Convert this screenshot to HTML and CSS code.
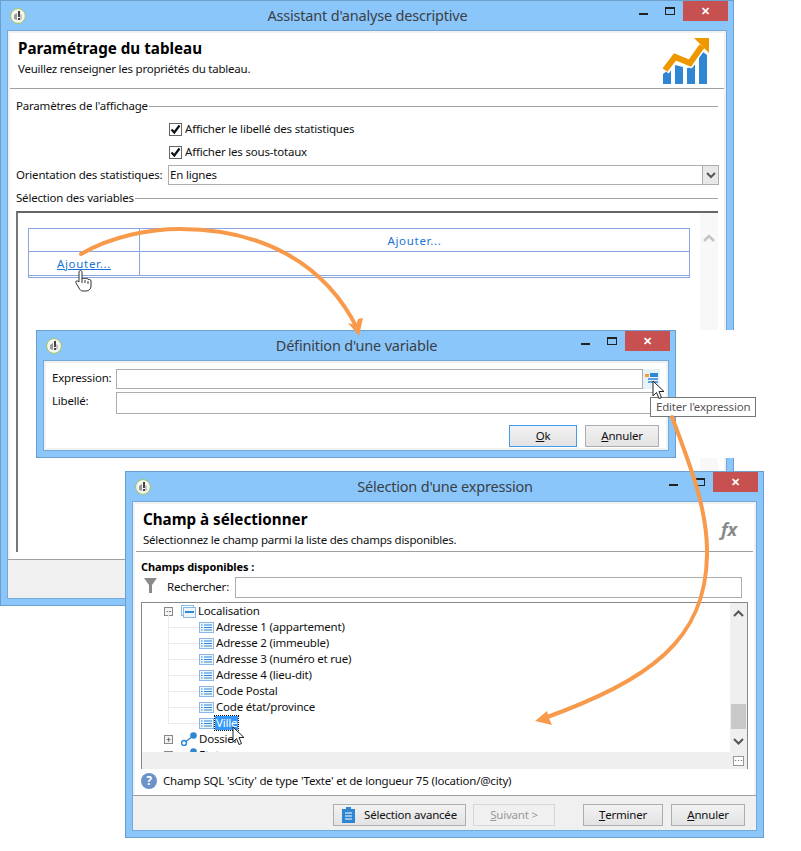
FILE: index.html
```html
<!DOCTYPE html>
<html lang="fr">
<head>
<meta charset="utf-8">
<title>Assistant d'analyse descriptive</title>
<link rel="stylesheet" href="styles.css">
</head>
<body>
<svg class="defs" aria-hidden="true">
  <symbol id="app" viewBox="0 0 16 16">
    <circle cx="8" cy="8" r="7.4" fill="#f4f4f0" stroke="#9cc45e" stroke-width="1"/>
    <path d="M4 7l3-2v7l-3-1z" fill="#9a9a9a"/>
    <path d="M8 3h2v6H8zM8 10h2v2H8z" fill="#444"/>
    <path d="M10 6l2 1v4l-2 1z" fill="#c4c4c4"/>
  </symbol>
  <symbol id="field" viewBox="0 0 15 11">
    <rect x=".5" y=".5" width="14" height="10" fill="#eef6fd" stroke="#8ab8e4"/>
    <path d="M2 3h1.500M2 5.500h1.500M2 8h1.500M5 3h8M5 5.500h8M5 8h8" stroke="#2f86d3" stroke-width="1"/>
  </symbol>
  <symbol id="link" viewBox="0 0 16 14">
    <circle cx="3" cy="11" r="2.500" fill="none" stroke="#2f86d3" stroke-width="1.500"/>
    <path d="M5 9.500l5-4" stroke="#2f86d3" stroke-width="1.500"/>
    <circle cx="12.500" cy="3.500" r="3.300" fill="#2f86d3"/>
  </symbol>
  <symbol id="arrowcur" viewBox="0 0 14 20">
    <path d="M1 1v15l3.500-3.500 2.500 6 2.500-1-2.500-6H12z" fill="#fff" stroke="#222" stroke-width="1"/>
  </symbol>
  <symbol id="tick" viewBox="0 0 11 11">
    <path d="M1.500 5.500L4.300 8.500 9.500 1.500" fill="none" stroke="#111" stroke-width="2.200"/>
  </symbol>
</svg>

<section class="win win-main">
  <header class="titlebar">
    <svg class="appicon"><use href="#app"/></svg>
    <h2 class="wintitle">Assistant d'analyse descriptive</h2>
    <div class="controls"><span class="min"></span><span class="max"></span><span class="close">✕</span></div>
  </header>
  <div class="winbody">
    <div class="pagehead pagehead-main">
      <div>
        <h1 class="pagetitle">Paramétrage du tableau</h1>
        <p class="pagesub">Veuillez renseigner les propriétés du tableau.</p>
      </div>
      <svg class="chart" viewBox="0 0 50 48">
        <path d="M3 37l8-6v16H3zM15 28l8 2v17h-8zM27 31l6-1 2-3v20h-8zM39 20l4-5 4 3v29h-8z" fill="#2f86d3"/>
        <path d="M5 34L15 20 30 26 42 9" fill="none" stroke="#fff" stroke-width="9"/>
        <path d="M5 33L15 20 30 26 42 9" fill="none" stroke="#ee9800" stroke-width="6" stroke-linejoin="miter"/>
        <path d="M34 1h15v15z" fill="#ee9800"/>
      </svg>
    </div>
    <div class="panel">
      <div class="legend legend-first"><span>Paramètres de l'affichage</span></div>
      <label class="check check-first"><span class="box"><svg class="tick"><use href="#tick"/></svg></span>Afficher le libellé des statistiques</label>
      <label class="check check-second"><span class="box"><svg class="tick"><use href="#tick"/></svg></span>Afficher les sous-totaux</label>
      <div class="selectrow">
        <span class="selectlabel">Orientation des statistiques:</span>
        <div class="select"><span class="selectval">En lignes</span><span class="selectbtn"><svg width="10" height="7" viewBox="0 0 10 7"><path d="M1 1l4 4 4-4" fill="none" stroke="#555" stroke-width="2"/></svg></span></div>
      </div>
      <div class="legend legend-second"><span>Sélection des variables</span></div>
      <div class="listbox">
        <div class="gridwrap">
          <div class="vtable">
            <div class="vcell vcell-blank"></div>
            <div class="vcell vcell-add">Ajouter...</div>
            <div class="vcell vcell-link"><a class="addlink">Ajouter...</a></div>
            <div class="vcell"></div>
          </div>
        </div>
        <div class="lightscroll"><svg width="12" height="8" viewBox="0 0 12 8"><path d="M1 7l5-5 5 5" fill="none" stroke="#c4c4c4" stroke-width="2.500"/></svg></div>
      </div>
    </div>
    <div class="bottombar bottombar-main"></div>
  </div>
</section>

<div class="patch"></div>

<section class="win win-var">
  <header class="titlebar">
    <svg class="appicon"><use href="#app"/></svg>
    <h2 class="wintitle">Définition d'une variable</h2>
    <div class="controls"><span class="min"></span><span class="max"></span><span class="close">✕</span></div>
  </header>
  <div class="winbody">
    <div class="form">
      <div class="formrow formrow-a">
        <span class="formlabel">Expression:</span>
        <div class="input input-grow"></div>
        <span class="exprbtn">
          <svg width="14" height="14" viewBox="0 0 14 14"><rect x="0" y="2" width="4" height="3" fill="#f0a030"/><rect x="5" y="1" width="8" height="4" fill="#2f86d3"/><path d="M3 7h10M3 10h10" stroke="#2f86d3" stroke-width="1.500"/></svg>
        </span>
      </div>
      <div class="formrow formrow-b">
        <span class="formlabel">Libellé:</span>
        <div class="input input-grow"></div>
      </div>
      <div class="formbtns">
        <button class="btn btn-ok"><u>O</u>k</button>
        <button class="btn btn-cancel"><u>A</u>nnuler</button>
      </div>
    </div>
  </div>
</section>

<section class="win win-expr">
  <header class="titlebar">
    <svg class="appicon"><use href="#app"/></svg>
    <h2 class="wintitle">Sélection d'une expression</h2>
    <div class="controls"><span class="min"></span><span class="max"></span><span class="close">✕</span></div>
  </header>
  <div class="winbody">
    <div class="pagehead pagehead-expr">
      <div>
        <h1 class="pagetitle">Champ à sélectionner</h1>
        <p class="pagesub">Sélectionnez le champ parmi la liste des champs disponibles.</p>
      </div>
      <span class="fx">fx</span>
    </div>
    <div class="exprmain">
      <div class="availlabel">Champs disponibles :</div>
      <div class="searchrow">
        <svg class="funnel" width="13" height="15" viewBox="0 0 13 15"><path d="M0 0h13L8 7v8H5V7z" fill="#8a8a8a"/></svg>
        <span class="searchlabel">Rechercher:</span>
        <div class="input input-grow"></div>
      </div>
      <div class="tree">
        <div class="treepane">
          <div class="node node-parent">
            <span class="expander">−</span>
            <svg class="nodeicon" width="15" height="13" viewBox="0 0 15 13"><rect x=".5" y=".5" width="12" height="10" fill="#fff" stroke="#8ab8e4"/><rect x="2.500" y="2.500" width="12" height="10" fill="#eef6fd" stroke="#8ab8e4"/><rect x="4" y="6" width="9" height="2" fill="#2f86d3"/></svg>
            <span>Localisation</span>
          </div>
          <div class="node node-child"><svg class="fieldicon"><use href="#field"/></svg><span>Adresse 1 (appartement)</span></div>
          <div class="node node-child"><svg class="fieldicon"><use href="#field"/></svg><span>Adresse 2 (immeuble)</span></div>
          <div class="node node-child"><svg class="fieldicon"><use href="#field"/></svg><span>Adresse 3 (numéro et rue)</span></div>
          <div class="node node-child"><svg class="fieldicon"><use href="#field"/></svg><span>Adresse 4 (lieu-dit)</span></div>
          <div class="node node-child"><svg class="fieldicon"><use href="#field"/></svg><span>Code Postal</span></div>
          <div class="node node-child"><svg class="fieldicon"><use href="#field"/></svg><span>Code état/province</span></div>
          <div class="node node-child"><svg class="fieldicon"><use href="#field"/></svg><span class="selected">Ville</span></div>
          <div class="node node-parent">
            <span class="expander">+</span>
            <svg class="nodeicon" width="16" height="14"><use href="#link"/></svg>
            <span>Dossier</span>
          </div>
          <div class="node node-parent">
            <span class="expander">+</span>
            <svg class="nodeicon" width="16" height="14"><use href="#link"/></svg>
            <span>Etat</span>
          </div>
        </div>
        <div class="treescroll">
          <svg width="11" height="7" viewBox="0 0 11 7"><path d="M1 6l4.500-4.500L10 6" fill="none" stroke="#555" stroke-width="2"/></svg>
          <span class="thumb"></span>
          <svg width="11" height="7" viewBox="0 0 11 7"><path d="M1 1l4.500 4.500L10 1" fill="none" stroke="#555" stroke-width="2"/></svg>
        </div>
        <div class="hscroll"></div>
        <div class="corner"><span class="cornerbtn">⋯</span></div>
      </div>
      <div class="inforow">
        <span class="help">?</span>
        <span>Champ SQL 'sCity' de type 'Texte' et de longueur 75 (location/@city)</span>
      </div>
    </div>
    <div class="bottombar bottombar-expr">
      <button class="btn btn-adv">
        <svg width="13" height="16" viewBox="0 0 13 16"><path d="M4 0h5v2h4v14H0V2h4z" fill="#2f86d3"/><path d="M3 6h7M3 9h7M3 12h7" stroke="#fff" stroke-width="1"/></svg>
        Sélection avancée
      </button>
      <button class="btn btn-next" disabled><u>S</u>uivant &gt;</button>
      <button class="btn btn-finish"><u>T</u>erminer</button>
      <button class="btn btn-cancel2"><u>A</u>nnuler</button>
    </div>
  </div>
</section>

<div class="tooltip">Editer l'expression</div>

<svg class="overlay" viewBox="0 0 801 851">
  <g fill="none" stroke="#f79a4b" stroke-width="4" stroke-linecap="round">
    <path d="M81 254C112 236 150 229 180 229C260 229 325 262 358 330"/>
    <path d="M672 417C690 465 708 510 707 555C706 640 650 680 542 719"/>
  </g>
  <path d="M359 336L348 323 356 325 358 319 363 318z" fill="#f79a4b"/>
  <path d="M535 721L547 711 549 718 552 725z" fill="#f79a4b"/>
  <g>
    <path d="M79 272c0-2 3-2 3 0v7c1-1 3-1 3 0 1-1 3-1 3 .5 1-.5 3 0 3 1.500v5c0 3-2 5-5 5h-3c-2 0-3-1-4-3l-3-5c-1-2 1-3 3-1l0 0z" fill="#fff" stroke="#333" stroke-width="1"/>
    <path d="M82 279v4M85 280v3M88 281v3" stroke="#333" stroke-width="1"/>
  </g>
  <use href="#arrowcur" x="652" y="380" width="14" height="20"/>
  <use href="#arrowcur" x="232" y="726" width="14" height="20"/>
</svg>
</body>
</html>
```
FILE: styles.css
```css
* { box-sizing: border-box; }
html, body { margin: 0; padding: 0; }
body {
  position: relative;
  width: 801px;
  height: 851px;
  overflow: hidden;
  background: #fff;
  font-family: "Noto Sans", "Open Sans", sans-serif;
  font-size: 11.5px;
  letter-spacing: -0.2px;
  line-height: 14px;
  color: #111;
}
.defs { position: absolute; width: 0; height: 0; }
.overlay { position: absolute; left: 0; top: 0; width: 801px; height: 851px; z-index: 10; pointer-events: none; }

/* windows on the desktop */
.win {
  position: absolute;
  display: flex;
  flex-direction: column;
  background: #8bc6fb;
  border: 1px solid #6c9fcc;
  padding: 0 6px 6px;
}
.win-main { left: 0; top: 0; width: 734px; height: 606px; }
.win-var { left: 36px; top: 330px; width: 640px; height: 128px; z-index: 3; }
.win-expr { left: 125px; top: 471px; width: 639px; height: 367px; z-index: 4; }
.patch { position: absolute; left: 676px; top: 330px; width: 125px; height: 128px; background: #fff; z-index: 2; }

.titlebar { position: relative; height: 29px; flex: none; display: flex; align-items: center; justify-content: center; }
.appicon { position: absolute; left: 3px; top: 7px; width: 16px; height: 16px; }
.wintitle { margin: 0 0 0 1px; font-size: 14.5px; font-weight: 400; color: #3a3f45; line-height: 20px; position: relative; top: -1px; }
.controls { position: absolute; right: -1px; top: 0; display: flex; align-items: flex-start; }
.min { width: 9px; height: 2px; margin: 12px 17px 0 0; background: #222; }
.max { width: 10px; height: 8px; margin: 6px 8px 0 0; border: 1px solid #222; border-top-width: 2px; }
.close { width: 45px; height: 20px; background: #c75050; color: #fff; text-align: center; font-size: 11px; line-height: 20px; font-weight: 700; }

.winbody {
  flex: 1;
  display: flex;
  flex-direction: column;
  min-height: 0;
  background: #fff;
  border: 1px solid #74a9dc;
  box-shadow: inset 0 0 0 2px #f1f1f1;
  padding: 2px;
}

.pagehead { display: flex; justify-content: space-between; flex: none; border-bottom: 1px solid #a0a0a0; }
.pagehead-main { height: 56px; padding: 5px 14px 0 8px; }
.pagehead-expr { height: 48px; padding: 5px 16px 0 7px; margin: 0 1px; }
.pagetitle { margin: 0; font-size: 15.2px; letter-spacing: 0; line-height: 20px; font-weight: 700; color: #000; }
.pagesub { margin: 4px 0 0; line-height: 14px; font-size: 11.5px; letter-spacing: -.24px; }
.chart { width: 50px; height: 48px; margin-top: -1px; }
.fx { font-family: "Noto Sans", sans-serif; font-style: italic; font-weight: 700; font-size: 18px; line-height: 24px; color: #8a8a8a; margin-top: 8px; }

/* main window */
.panel { flex: none; padding: 0 6px; }
.legend { display: flex; align-items: center; gap: 1px; height: 14px; }
.legend::after { content: ""; flex: 1; height: 1px; background: #a0a0a0; }
.legend-first { margin-top: 10px; }
.legend-second { margin-top: 6px; }
.check { display: flex; align-items: center; height: 16px; padding-left: 153px; }
.check-first { margin-top: 8px; }
.check-second { margin-top: 7px; }
.box { width: 13px; height: 13px; margin-right: 3px; border: 1px solid #666; background: #fff; display: flex; }
.tick { width: 11px; height: 11px; }
.selectrow { display: flex; align-items: center; height: 20px; margin-top: 5px; }
.selectlabel { width: 152px; flex: none; white-space: nowrap; }
.select { flex: 1; height: 20px; display: flex; margin-right: -1px; border: 1px solid #adadad; }
.selectval { flex: 1; padding-left: 1px; line-height: 18px; }
.selectbtn { width: 16px; display: flex; align-items: center; justify-content: center; background: #e8e8e8; border-left: 1px solid #adadad; }

.listbox { display: flex; height: 341px; margin-top: 6px; border-top: 2px solid #666; border-left: 2px solid #777; }
.gridwrap { flex: 1; padding: 15px 10px 0; }
.vtable { display: grid; grid-template-columns: 111px 1fr; border: 1px solid #8aa6e0; border-bottom: 3px double #8aa6e0; }
.vcell { height: 23px; line-height: 24px; text-align: center; color: #1a73d8; letter-spacing: .7px; }
.vcell:nth-child(odd) { border-right: 1px solid #8aa6e0; }
.vcell-blank, .vcell-add { border-bottom: 1px solid #8aa6e0; }
.addlink { text-decoration: underline; }
.lightscroll { width: 18px; background: #f8f8f8; text-align: center; padding-top: 18px; }

.bottombar { flex: 1; background: #f0f0f0; }
.bottombar-main { margin: 7px -2px -2px; border-top: 1px solid #a0a0a0; }

/* variable window */
.form { padding: 6px 6px 0 6px; }
.formrow { display: flex; align-items: stretch; }
.formrow-a { height: 20px; }
.formrow-b { height: 22px; margin-top: 3px; }
.formlabel { width: 64px; line-height: 17px; }
.input { border: 1px solid #adadad; background: #fff; }
.input-grow { flex: 1; }
.exprbtn { width: 17px; background: #e5f1fb; display: flex; align-items: center; justify-content: center; }
.formbtns { display: flex; justify-content: flex-end; gap: 8px; margin-top: 11px; padding-right: 1px; }

.btn {
  height: 22px;
  padding: 0 0 1px;
  font: inherit;
  letter-spacing: inherit;
  color: #111;
  background: linear-gradient(#f2f2f2, #e3e3e3);
  border: 1px solid #adadad;
  border-radius: 0;
  display: inline-flex;
  align-items: center;
  justify-content: center;
}
.btn-ok { width: 68px; border-color: #3f9bf0; }
.btn-cancel { width: 74px; }
.btn-adv { width: 133px; gap: 9px; }
.btn-next { width: 82px; margin-left: 7px; color: #999; background: #f0f0f0; border-color: #d6d6d6; }
.btn-finish { width: 80px; margin-left: 28px; }
.btn-cancel2 { width: 74px; margin-left: 8px; }

/* tooltip */
.tooltip { position: absolute; left: 650px; top: 397px; width: 106px; height: 20px; border: 1px solid #777; background: #fff; color: #555; line-height: 18px; padding-left: 5px; z-index: 6; white-space: nowrap; }

/* expression window */
.exprmain { flex: none; height: 243px; padding: 0 6px; }
.availlabel { margin-top: 8px; font-weight: 700; font-size: 11px; letter-spacing: -.1px; color: #000; }
.searchrow { display: flex; align-items: stretch; height: 21px; margin-top: 3px; padding-right: 6px; }
.funnel { margin: 1px 10px 0 3px; }
.searchlabel { width: 68px; line-height: 19px; }
.tree { display: grid; grid-template-columns: 1fr 17px; grid-template-rows: 149px 17px; margin-top: 4px; height: 167px; border: 1px solid #888; }
.treepane { overflow: hidden; }
.node { position: relative; display: flex; align-items: center; height: 16px; }
.node-parent { padding-left: 22px; }
.node-child { padding-left: 57px; }
.node-child::before { content: ""; position: absolute; left: 26px; top: -8px; width: 31px; height: 16px; border-left: 1px solid #ececec; border-bottom: 1px solid #ececec; }
.expander { width: 9px; height: 9px; margin-right: 8px; border: 1px solid #888; font-size: 9px; line-height: 7px; text-align: center; background: #f4f4f4; color: #333; }
.nodeicon { margin-right: 2px; flex: none; }
.fieldicon { width: 15px; height: 11px; margin-right: 2px; flex: none; position: relative; }
.selected { background: #3399ff; color: #fff; outline: 1px dotted #111; padding: 0 1px; margin-left: -1px; position: relative; }
.treescroll { grid-row: 1; grid-column: 2; position: relative; display: flex; flex-direction: column; align-items: center; background: #efefef; padding-top: 7px; }
.thumb { width: 15px; height: 25px; margin-top: 87px; background: #c8c8c8; margin-bottom: 9px; }
.hscroll { background: #efefef; }
.corner { background: #efefef; display: flex; align-items: center; justify-content: center; }
.cornerbtn { width: 11px; height: 10px; border: 1px solid #999; background: #fff; font-size: 9px; line-height: 7px; text-align: center; color: #555; }
.inforow { display: flex; align-items: center; gap: 6px; height: 24px; margin-top: 0; }
.help { width: 16px; height: 16px; border-radius: 50%; background: #6d92c8; color: #fff; font-weight: 700; font-size: 12px; line-height: 16px; text-align: center; }
.bottombar-expr { display: flex; align-items: flex-start; margin: 0 -2px -2px; padding: 8px 0 0 200px; border-top: 1px solid #a0a0a0; }
```
